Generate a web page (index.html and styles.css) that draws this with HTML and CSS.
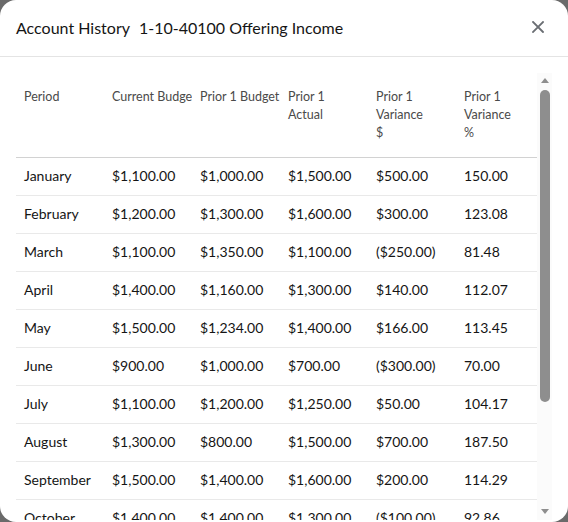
FILE: index.html
```html
<!DOCTYPE html>
<html lang="en">
<head>
<meta charset="utf-8">
<title>Account History</title>
<link rel="stylesheet" href="styles.css">
</head>
<body>
<div class="modal">
  <header class="modal-header">
    <h1 class="modal-title"><span>Account History</span><span>1-10-40100 Offering Income</span></h1>
    <button class="close" aria-label="Close">
      <svg width="12" height="12" viewBox="0 0 12 12"><path d="M1 1L11 11M11 1L1 11" stroke="#6a6e73" stroke-width="1.8" stroke-linecap="square"/></svg>
    </button>
  </header>
  <div class="modal-body">
    <div class="scroller">
      <div class="viewport">
        <table class="history">
          <colgroup><col class="c"><col class="c"><col class="c"><col class="c"><col class="c"><col></colgroup>
          <thead>
            <tr>
              <th>Period</th>
              <th>Current Budget</th>
              <th>Prior 1 Budget</th>
              <th>Prior 1<br>Actual</th>
              <th>Prior 1<br>Variance<br>$</th>
              <th>Prior 1<br>Variance<br>%</th>
            </tr>
          </thead>
          <tbody>
            <tr><td>January</td><td>$1,100.00</td><td>$1,000.00</td><td>$1,500.00</td><td>$500.00</td><td>150.00</td></tr>
            <tr><td>February</td><td>$1,200.00</td><td>$1,300.00</td><td>$1,600.00</td><td>$300.00</td><td>123.08</td></tr>
            <tr><td>March</td><td>$1,100.00</td><td>$1,350.00</td><td>$1,100.00</td><td>($250.00)</td><td>81.48</td></tr>
            <tr><td>April</td><td>$1,400.00</td><td>$1,160.00</td><td>$1,300.00</td><td>$140.00</td><td>112.07</td></tr>
            <tr><td>May</td><td>$1,500.00</td><td>$1,234.00</td><td>$1,400.00</td><td>$166.00</td><td>113.45</td></tr>
            <tr><td>June</td><td>$900.00</td><td>$1,000.00</td><td>$700.00</td><td>($300.00)</td><td>70.00</td></tr>
            <tr><td>July</td><td>$1,100.00</td><td>$1,200.00</td><td>$1,250.00</td><td>$50.00</td><td>104.17</td></tr>
            <tr><td>August</td><td>$1,300.00</td><td>$800.00</td><td>$1,500.00</td><td>$700.00</td><td>187.50</td></tr>
            <tr><td>September</td><td>$1,500.00</td><td>$1,400.00</td><td>$1,600.00</td><td>$200.00</td><td>114.29</td></tr>
            <tr><td>October</td><td>$1,400.00</td><td>$1,400.00</td><td>$1,300.00</td><td>($100.00)</td><td>92.86</td></tr>
          </tbody>
        </table>
      </div>
      <div class="scrollbar" aria-hidden="true">
        <div class="sb-btn"><span class="arrow up"></span></div>
        <div class="sb-track"><div class="sb-thumb"></div></div>
        <div class="sb-btn"><span class="arrow down"></span></div>
      </div>
    </div>
  </div>
</div>
</body>
</html>
```
FILE: styles.css
```css
html, body {
  margin: 0;
  padding: 0;
  background: #6a6a6a;
}
body {
  font-family: Lato, "Open Sans", sans-serif;
  color: #151515;
}
.modal {
  width: 568px;
  height: 522px;
  background: #fff;
  border-radius: 16px;
  overflow: hidden;
  display: flex;
  flex-direction: column;
}
.modal-header {
  height: 54px;
  padding: 0 18px 2px 16px;
  flex: none;
  display: flex;
  align-items: center;
  justify-content: space-between;
  border-bottom: 1px solid #e4e4e4;
}
.modal-title {
  margin: 0;
  font-size: 16px;
  font-weight: 400;
  display: flex;
  gap: 9px;
  color: #151515;
}
.close {
  border: 0;
  background: none;
  padding: 0;
  width: 24px;
  height: 24px;
  display: flex;
  align-items: center;
  justify-content: center;
}
.modal-body {
  flex: 1;
  padding: 16px 16px 2px 16px;
  min-height: 0;
}
.scroller {
  height: 100%;
  display: flex;
}
.viewport {
  flex: 1;
  min-width: 0;
  overflow: hidden;
}
.scrollbar {
  width: 15px;
  flex: none;
  background: #fbfbfb;
  display: flex;
  flex-direction: column;
}
.sb-btn {
  height: 15px;
  flex: none;
  display: flex;
  align-items: center;
  justify-content: center;
}
.arrow {
  width: 0;
  height: 0;
  border-left: 4.5px solid transparent;
  border-right: 4.5px solid transparent;
}
.arrow.up {
  border-bottom: 5px solid #8e8e8e;
  margin-top: -1px;
}
.arrow.down {
  border-top: 5px solid #8e8e8e;
  margin-top: -2px;
}
.sb-track {
  flex: 1;
  display: flex;
  justify-content: center;
}
.sb-thumb {
  width: 10px;
  height: 312px;
  margin-top: 2px;
  background: #8e8e8e;
  border-radius: 5px;
}
.history {
  width: 100%;
  table-layout: fixed;
  border-collapse: collapse;
}
.history col.c {
  width: 88px;
}
.history th {
  text-align: left;
  vertical-align: top;
  font-weight: 400;
  font-size: 12.5px;
  line-height: 18px;
  color: #4a4a4a;
  padding: 15px 0 15px 8px;
  white-space: nowrap;
  overflow: hidden;
  border-bottom: 1px solid #d2d2d2;
}
.history td {
  font-size: 14px;
  line-height: 36px;
  padding: 0 8px 1px;
  white-space: nowrap;
  border-bottom: 1px solid #e9e9e9;
}
```
